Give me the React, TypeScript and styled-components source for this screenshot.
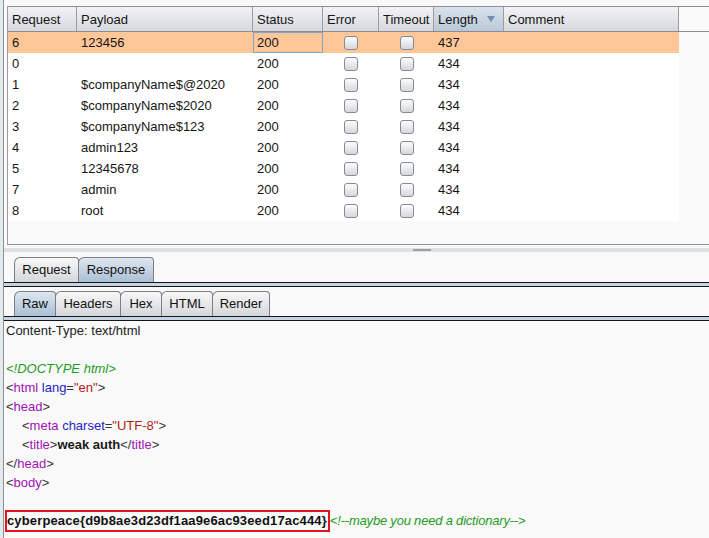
import React from "react";
import styled, { createGlobalStyle } from "styled-components";

const GlobalStyle = createGlobalStyle`
  html, body {
    margin: 0;
    padding: 0;
    background: #f9f9f9;
  }
  body {
    font-family: "Liberation Sans", Arial, sans-serif;
    font-size: 13px;
    color: #151515;
  }
`;

const columns = "69px 176px 70px 56px 55px 70px 175px";

const rows = [
  { id: "6", payload: "123456", status: "200", length: "437", selected: true },
  { id: "0", payload: "", status: "200", length: "434" },
  { id: "1", payload: "$companyName$@2020", status: "200", length: "434" },
  { id: "2", payload: "$companyName$2020", status: "200", length: "434" },
  { id: "3", payload: "$companyName$123", status: "200", length: "434" },
  { id: "4", payload: "admin123", status: "200", length: "434" },
  { id: "5", payload: "12345678", status: "200", length: "434" },
  { id: "7", payload: "admin", status: "200", length: "434" },
  { id: "8", payload: "root", status: "200", length: "434" },
];

const Screen = styled.div`
  width: 709px;
  height: 538px;
  overflow: hidden;
  display: flex;
  background: #f9f9f9;
`;

const SideStrip = styled.div`
  width: 3px;
  flex-shrink: 0;
  background: #e4e9ec;
  border-right: 1px solid #8c9196;
`;

const Main = styled.div`
  flex: 1;
  min-width: 0;
  display: flex;
  flex-direction: column;
`;

const ResultsPane = styled.div`
  margin-top: 6px;
  margin-left: 3px;
  height: 237px;
  border-top: 1px solid #8e8e96;
  border-left: 1px solid #9c9ca4;
  border-bottom: 1px solid #8e8e96;
  background: #fafafa;
`;

const HeaderRow = styled.div`
  display: grid;
  grid-template-columns: ${columns};
  height: 24px;
  border-bottom: 1px solid #8a8b93;
`;

const HeaderCell = styled.div<{ $sorted?: boolean }>`
  display: flex;
  align-items: center;
  justify-content: space-between;
  padding: 0 8px 0 4px;
  border-right: 1px solid #9a9ba3;
  background: ${(p) =>
    p.$sorted
      ? "linear-gradient(#dbe3ec, #b9c8d8)"
      : "linear-gradient(#f3f3f5, #d6d8dd)"};
  white-space: nowrap;
`;

const Row = styled.div<{ $selected?: boolean }>`
  display: grid;
  grid-template-columns: ${columns};
  height: 21px;
  background: ${(p) => (p.$selected ? "#ffc697" : "#ffffff")};
  width: 671px;
`;

const Cell = styled.div<{ $focus?: boolean }>`
  display: flex;
  align-items: center;
  padding-left: 4px;
  white-space: nowrap;
  box-shadow: ${(p) => (p.$focus ? "inset 0 0 0 1px #86a2c6" : "none")};
`;

const BoxCell = styled.div`
  display: flex;
  align-items: center;
  justify-content: center;
`;

const Check = styled.span`
  width: 12px;
  height: 12px;
  border: 1px solid #858b95;
  border-radius: 3px;
  background: linear-gradient(#fdfdfd, #d5d7dc);
`;

const Splitter = styled.div`
  margin-top: 3px;
  height: 4px;
  background: #dde0e5;
  display: flex;
  justify-content: flex-start;
  align-items: center;
  padding-left: 409px;
`;

const Grip = styled.span`
  width: 18px;
  height: 2px;
  background: #9c9ea6;
`;

const TabBar = styled.div<{ $gap: number }>`
  margin-top: ${(p) => p.$gap}px;
  display: flex;
  padding-left: 10px;
  height: 26px;
  align-items: flex-end;
`;

const Tab = styled.div<{ $active?: boolean; $w: number }>`
  box-sizing: border-box;
  width: ${(p) => p.$w}px;
  height: 25px;
  padding-bottom: 2px;
  margin-right: -1px;
  display: flex;
  align-items: center;
  justify-content: center;
  border: 1px solid #7c7d86;
  border-bottom: none;
  border-radius: 6px 4px 0 0;
  background: ${(p) =>
    p.$active
      ? "linear-gradient(#dfe7ef, #a9bfd3)"
      : "linear-gradient(#f8f8f8, #d5d6da)"};
  color: #111;
`;

const TabRule = styled.div`
  height: 3px;
  border-top: 1px solid #151515;
  border-bottom: 1px solid #151515;
  background: #c5d4e3;
`;

const Body = styled.div`
  padding-left: 2px;
  line-height: 19px;
  color: #222;
  white-space: pre;
`;

const Line = styled.div<{ $indent?: boolean }>`
  height: 19px;
  padding-left: ${(p) => (p.$indent ? 16 : 0)}px;
`;

const P = styled.span`
  color: #333;
`;
const Tag = styled.span`
  color: #a112b4;
`;
const Attr = styled.span`
  color: #1e1ec4;
`;
const Val = styled.span`
  color: #b01a1a;
`;
const Note = styled.span`
  color: #1f9a1f;
  font-style: italic;
`;
const TrailNote = styled(Note)`
  letter-spacing: -0.2px;
`;
const Strong = styled.span`
  font-weight: bold;
  color: #1a1a1a;
`;

const Flag = styled.span`
  display: inline-block;
  margin-left: -1px;
  margin-top: -1px;
  border: 2px solid #e3141c;
  line-height: 18px;
  padding: 0 1px 0 0;
  font-weight: bold;
  letter-spacing: 0.14px;
  color: #111;
`;

const SortArrow = () => (
  <svg width="8" height="6" viewBox="0 0 8 6">
    <path d="M0 0 H8 L4 6 Z" fill="#6f8db1" />
  </svg>
);

const headers = ["Request", "Payload", "Status", "Error", "Timeout", "Length", "Comment"];

const viewTabs = [
  { label: "Raw", w: 42 },
  { label: "Headers", w: 66 },
  { label: "Hex", w: 42 },
  { label: "HTML", w: 52 },
  { label: "Render", w: 58 },
];

const App: React.FC = () => {
  return (
    <>
      <GlobalStyle />
      <Screen>
        <SideStrip />
        <Main>
          <ResultsPane>
            <HeaderRow>
              {headers.map((h) => (
                <HeaderCell key={h} $sorted={h === "Length"}>
                  <span>{h}</span>
                  {h === "Length" && <SortArrow />}
                </HeaderCell>
              ))}
            </HeaderRow>
            {rows.map((r) => (
              <Row key={r.id} $selected={r.selected}>
                <Cell>{r.id}</Cell>
                <Cell>{r.payload}</Cell>
                <Cell $focus={r.selected}>{r.status}</Cell>
                <BoxCell>
                  <Check />
                </BoxCell>
                <BoxCell>
                  <Check />
                </BoxCell>
                <Cell>{r.length}</Cell>
                <Cell />
              </Row>
            ))}
          </ResultsPane>
          <Splitter>
            <Grip />
          </Splitter>
          <TabBar $gap={4}>
            <Tab $w={65}>Request</Tab>
            <Tab $w={76} $active>
              Response
            </Tab>
          </TabBar>
          <TabRule />
          <TabBar $gap={3}>
            {viewTabs.map((t, i) => (
              <Tab key={t.label} $w={t.w} $active={i === 0}>
                {t.label}
              </Tab>
            ))}
          </TabBar>
          <TabRule />
          <Body>
            <Line>Content-Type: text/html</Line>
            <Line />
            <Line>
              <Note>&lt;!DOCTYPE html&gt;</Note>
            </Line>
            <Line>
              <P>&lt;</P>
              <Tag>html</Tag> <Attr>lang</Attr>
              <P>=</P>
              <Val>"en"</Val>
              <P>&gt;</P>
            </Line>
            <Line>
              <P>&lt;</P>
              <Tag>head</Tag>
              <P>&gt;</P>
            </Line>
            <Line $indent>
              <P>&lt;</P>
              <Tag>meta</Tag> <Attr>charset</Attr>
              <P>=</P>
              <Val>"UTF-8"</Val>
              <P>&gt;</P>
            </Line>
            <Line $indent>
              <P>&lt;</P>
              <Tag>title</Tag>
              <P>&gt;</P>
              <Strong>weak auth</Strong>
              <P>&lt;/</P>
              <Tag>title</Tag>
              <P>&gt;</P>
            </Line>
            <Line>
              <P>&lt;/</P>
              <Tag>head</Tag>
              <P>&gt;</P>
            </Line>
            <Line>
              <P>&lt;</P>
              <Tag>body</Tag>
              <P>&gt;</P>
            </Line>
            <Line />
            <Line>
              <Flag>cyberpeace{"{"}d9b8ae3d23df1aa9e6ac93eed17ac444{"}"}</Flag>
              <TrailNote>&lt;!--maybe you need a dictionary--&gt;</TrailNote>
            </Line>
          </Body>
        </Main>
      </Screen>
    </>
  );
};

export default App;
